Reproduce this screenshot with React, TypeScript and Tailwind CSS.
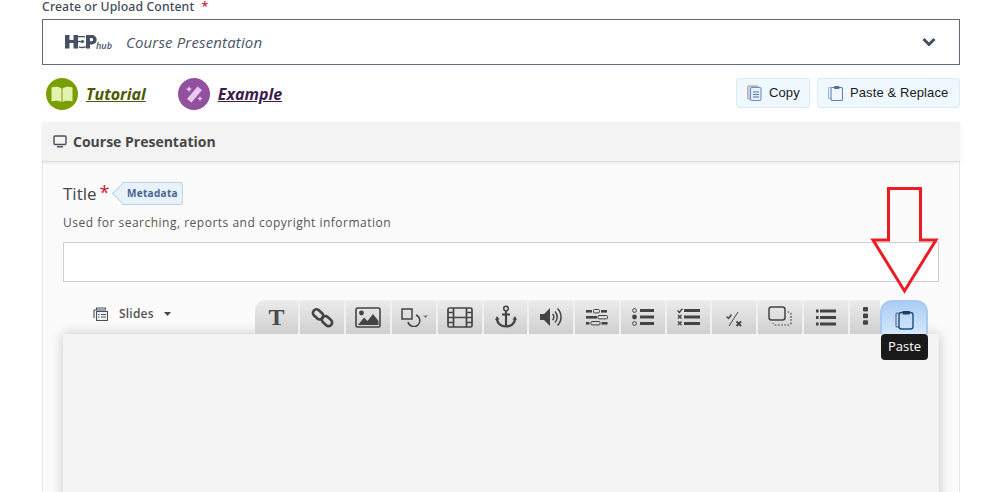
import React from "react";

const ic = "#444";

const tools: { w: string; el: React.ReactNode }[] = [
  {
    w: "w-[45px] rounded-tl-[10px]",
    el: <span className="font-['Liberation_Serif',serif] text-[24px] font-bold text-[#4a4a4a] leading-none -mt-[1px]">T</span>,
  },
  {
    w: "w-[46px]",
    el: (
      <svg width="23" height="25" viewBox="0 0 26 26" fill="none" stroke={ic} strokeWidth="3">
        <rect x="1.5" y="5.5" width="13" height="8" rx="4" transform="rotate(42 8 9.5)" />
        <rect x="11.5" y="13" width="13" height="8" rx="4" transform="rotate(42 18 17)" />
      </svg>
    ),
  },
  {
    w: "w-[46px]",
    el: (
      <svg width="26" height="21" viewBox="0 0 26 21">
        <rect x="1" y="1" width="24" height="19" rx="1.5" fill="none" stroke={ic} strokeWidth="1.6" />
        <circle cx="6.5" cy="6" r="2.4" fill={ic} />
        <path d="M3 18 L9 10.5 L12.5 14 L18 7 L23.5 14 V18 Z" fill={ic} />
      </svg>
    ),
  },
  {
    w: "w-[46px]",
    el: (
      <svg width="27" height="20" viewBox="0 0 27 20" fill="none" stroke={ic} strokeWidth="1.5">
        <rect x="1" y="2" width="10" height="10" />
        <path d="M15 8 A6 6 0 1 1 7 15" />
        <path d="M22 8.5h5l-2.5 2.5z" fill="#777" stroke="none" />
      </svg>
    ),
  },
  {
    w: "w-[46px]",
    el: (
      <svg width="26" height="21" viewBox="0 0 26 21" fill="none" stroke={ic} strokeWidth="1.7">
        <rect x="1" y="1" width="24" height="19" rx="1.5" />
        <path d="M6.5 1v19M19.5 1v19M6.5 10.5h13M1 5.5h5.5M1 10.5h5.5M1 15.5h5.5M19.5 5.5H25M19.5 10.5H25M19.5 15.5H25" />
      </svg>
    ),
  },
  {
    w: "w-[45px]",
    el: (
      <svg width="22" height="24" viewBox="0 0 22 24" fill="none" stroke={ic} strokeWidth="2.2">
        <circle cx="11" cy="3.5" r="2.3" strokeWidth="1.5" />
        <path d="M11 6v16M7 9.5h8" />
        <path d="M2 13.5c0 5 4 8 9 8s9-3 9-8" />
        <path d="M0 15l2-4 2.5 3.5zM22 15l-2-4-2.5 3.5z" fill={ic} stroke="none" />
      </svg>
    ),
  },
  {
    w: "w-[46px]",
    el: (
      <svg width="23" height="20" viewBox="0 0 23 20" fill="none" stroke={ic}>
        <path d="M0 7h4l6-6v18l-6-6H0z" fill={ic} stroke="none" />
        <path d="M12.5 7a4 4 0 0 1 0 6" strokeWidth="1.5" />
        <path d="M15 4.5a8 8 0 0 1 0 11" strokeWidth="1.5" />
        <path d="M17.5 1.5a12 12 0 0 1 0 17" strokeWidth="1.5" />
      </svg>
    ),
  },
  {
    w: "w-[46px]",
    el: (
      <svg width="22" height="17" viewBox="0 0 22 17" fill="none" stroke={ic} strokeWidth="1">
        <rect x="0" y="1" width="6" height="2.6" fill={ic} stroke="none" />
        <rect x="7.5" y="0.5" width="6" height="3.4" rx="1" />
        <rect x="15" y="1" width="6" height="2.6" fill={ic} stroke="none" />
        <rect x="0" y="7" width="11" height="2.6" fill={ic} stroke="none" />
        <rect x="12" y="6.5" width="9.5" height="3.4" rx="1" />
        <rect x="0" y="13" width="3.5" height="2.6" fill={ic} stroke="none" />
        <rect x="5" y="12.5" width="9" height="3.4" rx="1" />
        <rect x="15.5" y="13" width="6" height="2.6" fill={ic} stroke="none" />
      </svg>
    ),
  },
  {
    w: "w-[46px]",
    el: (
      <svg width="22" height="18" viewBox="0 0 22 18" fill={ic}>
        <circle cx="2.5" cy="2.5" r="1.9" fill="none" stroke={ic} strokeWidth="1" />
        <circle cx="2.5" cy="9" r="2.4" />
        <circle cx="2.5" cy="15.5" r="1.9" fill="none" stroke={ic} strokeWidth="1" />
        <rect x="8" y="1" width="14" height="3" />
        <rect x="8" y="7.5" width="14" height="3" />
        <rect x="8" y="14" width="14" height="3" />
      </svg>
    ),
  },
  {
    w: "w-[45px]",
    el: (
      <svg width="24" height="18" viewBox="0 0 24 18" fill="none" stroke={ic} strokeWidth="1.4">
        <path d="M0.5 2.5l1.8 2 3-3.8" />
        <path d="M1 7l3.5 3.5M4.5 7L1 10.5M1 13.5L4.5 17M4.5 13.5L1 17" />
        <rect x="7" y="1" width="16" height="3" fill={ic} stroke="none" />
        <rect x="7" y="7.5" width="16" height="3" fill={ic} stroke="none" />
        <rect x="7" y="14" width="16" height="3" fill={ic} stroke="none" />
      </svg>
    ),
  },
  {
    w: "w-[46px]",
    el: (
      <svg width="16" height="16" viewBox="0 0 16 16" fill="none" stroke={ic} strokeWidth="1.4" className="mt-[3px]">
        <path d="M0.5 5.5l2 2 3-4" />
        <path d="M3 15L12 1" strokeWidth="1" />
        <path d="M10.5 10.5l4.5 4.5M15 10.5l-4.5 4.5" strokeWidth="1.8" />
      </svg>
    ),
  },
  {
    w: "w-[46px]",
    el: (
      <svg width="24" height="21" viewBox="0 0 24 21" fill="none" stroke={ic} className="-mt-[2px]">
        <rect x="1" y="1" width="16" height="13" rx="2.5" strokeWidth="1.5" />
        <path d="M19.5 6h1.5a2 2 0 0 1 2 2v9a2 2 0 0 1-2 2H7a2 2 0 0 1-1.7-2" strokeWidth="1.2" strokeDasharray="1.6 1.6" />
      </svg>
    ),
  },
  {
    w: "w-[46px]",
    el: (
      <svg width="20" height="17" viewBox="0 0 20 17" fill={ic}>
        <rect x="0" y="0.5" width="2.6" height="3" />
        <rect x="4" y="0.5" width="16" height="3" />
        <rect x="0" y="7" width="2.6" height="3" />
        <rect x="4" y="7" width="16" height="3" />
        <rect x="0" y="13.5" width="2.6" height="3" />
        <rect x="4" y="13.5" width="16" height="3" />
      </svg>
    ),
  },
  {
    w: "w-[30px]",
    el: (
      <svg width="5" height="18" viewBox="0 0 5 18" fill={ic} className="-mt-[2px]">
        <rect x="0" y="0" width="5" height="4.6" rx="1" />
        <rect x="0" y="6.6" width="5" height="4.6" rx="1" />
        <rect x="0" y="13.2" width="5" height="4.6" rx="1" />
      </svg>
    ),
  },
];

function Tool({ w, el, last }: { w: string; el: React.ReactNode; last: boolean }) {
  return (
    <div
      className={`${w} h-[34px] flex items-center justify-center bg-gradient-to-b from-[#ececec] to-[#cfcfcf] ${
        last ? "" : "border-r-2 border-[#f1f1f1]"
      }`}
    >
      {el}
    </div>
  );
}

export default function App() {
  return (
    <div className="relative w-[996px] h-[492px] overflow-hidden bg-white pl-[42px] pr-[36px] font-['Open_Sans',sans-serif] text-[#444]">
      <div className="pt-[1px] h-[19px] text-[12.25px] leading-[11px] font-['Noto_Sans',sans-serif] font-medium text-[#3f4a58] tracking-[0.1px]">
        Create or Upload Content <span className="ml-[4px] text-[#d5122b]">*</span>
      </div>

      <div className="h-[46px] border border-[#5f6b7c] flex items-center pl-[22px] pr-[23px]">
        <div className="flex items-end w-[61px] h-[18px] shrink-0">
          <svg width="33" height="15" viewBox="0 0 33 15" fill="#465062" className="mb-[2px] shrink-0">
            <rect x="0" y="1" width="4.5" height="13.5" />
            <rect x="8.5" y="1" width="4.5" height="13.5" />
            <rect x="4" y="6" width="5" height="3" />
            <rect x="13" y="6.8" width="3" height="1.4" />
            <circle cx="17.5" cy="7.5" r="1.6" />
            <path d="M13 2h7v1.3h-7z" />
            <path d="M14 12.3c2 .8 4.5 .8 6.5-.3l.6 1.2c-2.3 1.3-5.2 1.3-7.5.3z" />
            <path d="M21 1h6a4.7 4.7 0 0 1 0 9.4h-2v4.1h-4V1zM25 4v3.2h1.6a1.6 1.6 0 0 0 0-3.2z" fillRule="evenodd" />
          </svg>
          <span className="text-[9px] italic font-semibold leading-none text-[#465062] -ml-[2px] mb-[1px]">hub</span>
        </div>
        <span className="italic text-[15px] text-[#4b5666] tracking-[0.15px]">Course Presentation</span>
        <svg width="14" height="10" viewBox="0 0 14 10" fill="none" stroke="#465062" strokeWidth="3" className="ml-auto">
          <path d="M1.5 2l5.5 5.5L12.5 2" />
        </svg>
      </div>

      <div className="h-[57px] pt-[13px] flex items-start">
        <div className="flex items-center ml-[4px]">
          <span className="w-[32px] h-[32px] rounded-full bg-[#789e00] flex items-center justify-center">
            <svg width="22" height="17" viewBox="0 0 22 17">
              <path d="M0.5 1.5C4 0.5 8 0.5 10.5 2.5V16C8 14.5 4 14.5 0.5 15.5z" fill="#e4f2b0" />
              <path d="M21.5 1.5C18 0.5 14 0.5 11.5 2.5V16C14 14.5 18 14.5 21.5 15.5z" fill="#e4f2b0" />
            </svg>
          </span>
          <a className="ml-[8px] text-[16px] font-bold italic underline text-[#4b5a00] leading-none">Tutorial</a>
        </div>
        <div className="flex items-center ml-[32px]">
          <span className="w-[32px] h-[32px] rounded-full bg-[#92519f] flex items-center justify-center">
            <svg width="20" height="20" viewBox="0 0 20 20" fill="#ecc9f3">
              <path d="M13.5 2.5l4.5 3.5L7.5 18.5 3 15z" />
              <path d="M5 2l1 2.2L8.2 5 6 6 5 8.2 4 6 1.8 5 4 4.2zM16 12l.8 1.8 1.8.8-1.8.8-.8 1.8-.8-1.8-1.8-.8 1.8-.8z" />
            </svg>
          </span>
          <a className="ml-[8px] text-[16px] font-bold italic underline text-[#3c1d4a] leading-none">Example</a>
        </div>
        <div className="ml-auto flex gap-[7px] font-['Liberation_Sans',sans-serif] text-[13px] tracking-[0.1px] text-[#1a1a1a] whitespace-nowrap">
          <button className="w-[74px] h-[30px] rounded-[3px] border border-[#dcebf3] bg-[#eff8fe] flex items-center pl-[10px]">
            <svg width="15" height="16" viewBox="0 0 15 16" fill="none" strokeWidth="1.1" className="shrink-0">
              <rect x="0.5" y="0.8" width="10" height="13" rx="1.5" stroke="#d3a4a0" />
              <rect x="2" y="1.5" width="10" height="13" rx="1.5" stroke="#9db3d6" />
              <rect x="3.5" y="2.5" width="10.5" height="13" rx="1.5" fill="#e6f0fb" stroke="#6d90c4" />
              <path d="M6 7h6M6 9.5h6M6 12h6" stroke="#5277ae" />
            </svg>
            <span className="ml-[7px]">Copy</span>
          </button>
          <button className="w-[143px] h-[30px] rounded-[3px] border border-[#dcebf3] bg-[#eff8fe] flex items-center pl-[10px]">
            <svg width="15" height="16" viewBox="0 0 15 16" fill="none" strokeWidth="1.1" className="shrink-0">
              <path d="M3 2.5H1.5a1 1 0 0 0-1 1v9a1 1 0 0 0 1 1H3" stroke="#9db3d6" />
              <rect x="3" y="2.5" width="11.5" height="13" rx="1.5" stroke="#5f7fb0" />
              <rect x="6" y="1" width="5.5" height="3" rx="1" fill="#4f6f9f" />
            </svg>
            <span className="ml-[7px]">Paste &amp; Replace</span>
          </button>
        </div>
      </div>

      <div className="border-x border-[#e8e8e8] h-[371px] bg-[#fbfbfb]">
        <div className="h-[40px] -mx-px bg-[#f3f3f3] border-b border-[#dedede] shadow-[0_1px_3px_rgba(0,0,0,0.08)] flex items-center pl-[11px]">
          <svg width="14" height="13" viewBox="0 0 14 13" fill="none" stroke="#47505e" strokeWidth="1.4">
            <rect x="1" y="1" width="12" height="8.5" rx="1" />
            <path d="M4 11.8h6" />
          </svg>
          <span className="ml-[6px] text-[14px] font-bold text-[#474747]">Course Presentation</span>
        </div>

        <div className="px-[20px]">
          <div className="mt-[20px] h-[24px] flex items-center">
            <span className="text-[17px] text-[#474747]">Title</span>
            <span className="ml-[3px] -mt-[4px] text-[18px] leading-none text-[#d5122b]">*</span>
            <span className="relative ml-[13px] -mt-[1px] h-[23px] w-[61px] rounded-r-[3px] border border-l-0 border-[#bcd3e6] bg-[#e8f2fa] text-[10px] font-bold text-[#47658d] flex items-center justify-center tracking-[0.3px]">
              <span className="absolute -left-[7px] top-[3px] w-[15px] h-[15px] rotate-45 bg-[#e8f2fa] border-l border-b border-[#bcd3e6]" />
              <span className="relative">Metadata</span>
            </span>
          </div>
          <div className="mt-[9px] text-[12px] leading-[16px] tracking-[0.5px] text-[#555]">
            Used for searching, reports and copyright information
          </div>
          <div className="mt-[11px] h-[40px] border border-[#cfcfcf] bg-white" />

          <div className="mt-[18px] flex h-[34px] items-start">
            <div className="flex items-center ml-[30px] h-[27px] w-[162px] text-[12px] font-semibold text-[#555] tracking-[0.2px]">
              <svg width="15" height="14" viewBox="0 0 15 14" fill="none" stroke="#47505e" strokeWidth="1.1">
                <path d="M3.5 3V1h9v1.5" />
                <path d="M1 11V3h12" />
                <rect x="3.5" y="4.5" width="11" height="9" fill="#f5f5f5" />
                <path d="M8 7.5h5M8 10h5M5 7.5h1.5M5 10h1.5" />
              </svg>
              <span className="ml-[11px]">Slides</span>
              <svg width="7" height="4" viewBox="0 0 7 4" fill="#444" className="ml-[10px]">
                <path d="M0 0h7L3.5 4z" />
              </svg>
            </div>
            <div className="flex">
              {tools.map((t, i) => (
                <Tool key={i} w={t.w} el={t.el} last={i === tools.length - 1} />
              ))}
              <div className="w-[48px] h-[34px] rounded-t-[12px] border-2 border-b-0 border-[#a9c9f3] bg-gradient-to-b from-[#aacdf3] to-[#d6e8fb] flex items-center justify-center">
                <svg width="19" height="20" viewBox="0 0 19 20" fill="none" stroke="#33506f" strokeWidth="1.4" className="mt-[3px]">
                  <path d="M3.5 3H2.5a1.5 1.5 0 0 0-1.5 1.5v11A1.5 1.5 0 0 0 2.5 17H4" stroke="#6b7f98" />
                  <rect x="4" y="2.5" width="14" height="16.5" rx="2.5" stroke="#1f4f85" />
                  <rect x="7.5" y="1" width="7.5" height="3.6" rx="1" fill="#1f3f66" stroke="none" />
                </svg>
              </div>
            </div>
          </div>
          <div className="h-[170px] bg-[#f4f4f4] shadow-[0_0_12px_rgba(0,0,0,0.22)]" />
        </div>
      </div>

      <div className="absolute left-[881px] top-[334px] w-[47px] h-[26px] rounded-[4px] bg-[#1a1a1a] text-white text-[13px] flex items-center justify-center">
        Paste
      </div>

      <svg width="70" height="114" viewBox="0 0 70 114" fill="none" stroke="#ed1c24" strokeWidth="3" className="absolute left-[870px] top-[186px]">
        <path d="M18.5 2.5H50.5V54H66L34.5 105L3 54H18.5Z" />
      </svg>
    </div>
  );
}
